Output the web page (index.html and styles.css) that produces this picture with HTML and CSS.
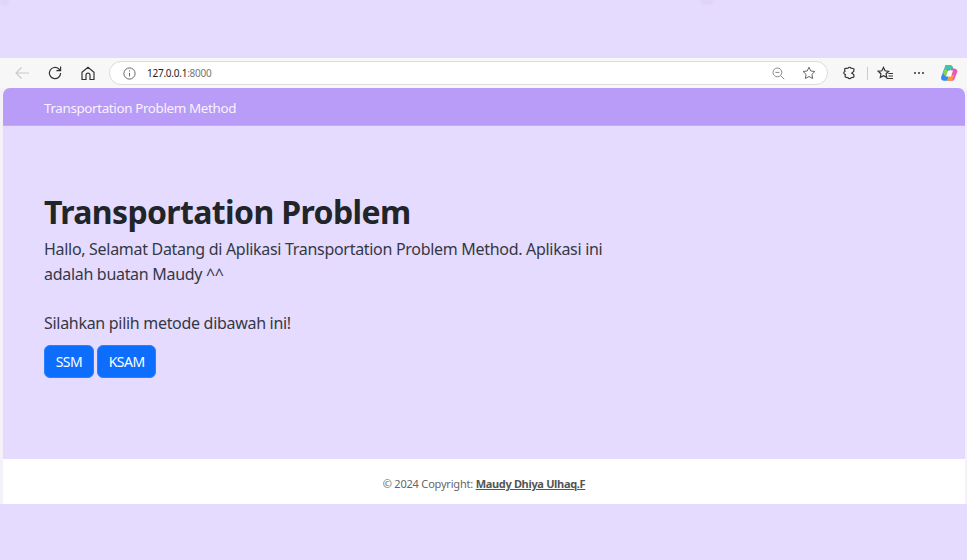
FILE: index.html

```html
<!DOCTYPE html>
<html lang="en">
<head>
  <meta charset="UTF-8">
  <meta name="viewport" content="width=device-width, initial-scale=1.0">
  <title>Transportation Problem</title>
  <link rel="stylesheet" href="styles.css">
</head>
<body>
  <div class="top-space">
    <span class="smudge smudge-left"></span>
    <span class="smudge smudge-mid"></span>
  </div>

  <div class="toolbar">
    <svg class="tool tool-back" width="16" height="14" viewBox="0 0 16 14"><path d="M15 7H2M7.5 1.5L2 7l5.5 5.5"/></svg>
    <svg class="tool tool-reload" width="16" height="16" viewBox="0 0 16 16"><path d="M13.6 8a5.6 5.6 0 1 1-1.7-4L13.6 5.6M13.6 1.4v4.2H9.4"/></svg>
    <svg class="tool tool-home" width="14" height="15" viewBox="0 0 14 15"><path d="M1 6.2L7 1.2l6 5v7.3H9V9.2a2 2 0 0 0-4 0v4.300H1z"/></svg>
    <div class="address">
      <svg class="info" width="13" height="13" viewBox="0 0 13 13"><circle cx="6.5" cy="6.5" r="5.6"/><path d="M6.5 5.8v3.6M6.5 3.4v1.1"/></svg>
      <span class="url"><span class="host">127.0.0.1</span>:8000</span>
      <svg class="zoom-icon" width="13" height="13" viewBox="0 0 13 13"><circle cx="5.4" cy="5.4" r="4.4"/><path d="M3.4 5.4h4M8.6 8.6l3.6 3.6"/></svg>
      <svg class="star" width="14" height="14" viewBox="0 0 14 14"><path d="M7 1.2l1.8 3.8 4.1.5-3 2.9.8 4.1L7 10.500l-3.700 2 .8-4.100-3-2.900 4.100-.5z"/></svg>
    </div>
    <svg class="tool tool-ext" width="15" height="15" viewBox="0 0 15 15"><path d="M6 2.200c.6-1.300 2.500-1.300 3 0l2 .3c.7.1 1.100.6 1 1.300l-.3 1.600-2 1.700 2 1.500.3 1.500c.1.7-.3 1.200-1 1.300l-1.900.3c-.5 1.300-2.500 1.300-3 0l-2-.3c-.7-.1-1.100-.6-1-1.300l.3-1.600C1.300 8 1.300 6 2.900 5.500l-.2-1.900c-.1-.7.3-1.200 1-1.300z"/></svg>
    <span class="divider"></span>
    <svg class="tool tool-fav" width="17" height="15" viewBox="0 0 17 15"><path d="M6.500 1.500l1.600 3.300 3.600.5-2.600 2.500.6 3.600-3.200-1.700-3.200 1.700.6-3.600L1.300 5.300l3.600-.5zM11.500 7.500h4.500M11.500 10h4.500M9.500 12.500h6.500"/></svg>
    <span class="more"><i></i><i></i><i></i></span>
    <svg class="copilot" width="18" height="18" viewBox="0 0 18 18">
      <path d="M5.500 1.200h5.500L7.500 16.800H4.200C1.800 16.800.6 15 1.200 13z" fill="#2f8bee"/>
      <path d="M5.500 1.200h5c1.300 0 2 .6 2.400 1.800l.7 2.500H7.500L5.200 11H3.500z" fill="#3cc9a0"/>
      <path d="M3 9l2-4.500 3 2.500-2 6z" fill="#8fd14f"/>
      <path d="M11 4.500h3c2 0 3 1.300 3.500 2.800l-3 7.700c-.5 1.300-1.500 1.800-3 1.800H8z" fill="#e858b4"/>
      <path d="M7 16.800l2-5.800h5.200l-1.500 4.300c-.4 1-1 1.500-2 1.500z" fill="#f79a3c"/>
      <path d="M8 6.500h5l-2 6H6z" fill="#ffffff"/>
    </svg>
  </div>

  <div class="viewport">
    <nav class="navbar">Transportation Problem Method</nav>
    <main class="content">
      <h1>Transportation Problem</h1>
      <p class="intro">Hallo, Selamat Datang di Aplikasi Transportation Problem Method. Aplikasi ini adalah buatan Maudy ^^</p>
      <p class="choose">Silahkan pilih metode dibawah ini!</p>
      <div class="buttons">
        <a class="btn" href="#">SSM</a>
        <a class="btn" href="#">KSAM</a>
      </div>
    </main>
    <footer class="footer">© 2024 Copyright:&nbsp;<a href="#">Maudy Dhiya Ulhaq.F</a></footer>
  </div>
</body>
</html>
```

FILE: styles.css

```css
* {
  box-sizing: border-box;
}
body {
  margin: 0;
  height: 560px;
  overflow: hidden;
  background-color: #e5dbff;
  font-family: "Noto Sans", "Open Sans", sans-serif;
  color: #212529;
}
.top-space {
  height: 58px;
  display: flex;
  align-items: flex-start;
}
.smudge {
  height: 5px;
  background-color: #dfd4f8;
  border-radius: 0 0 6px 6px;
  filter: blur(1px);
}
.smudge-left {
  width: 9px;
}
.smudge-mid {
  width: 14px;
  margin-left: 691px;
}
.toolbar {
  height: 30px;
  display: flex;
  align-items: center;
  background-color: #f7f7f7;
}
.toolbar svg {
  flex: none;
  fill: none;
  stroke: #333;
  stroke-width: 1.2;
}
.tool-back {
  margin-left: 14px;
  stroke: #c9c9c9 !important;
}
.tool-reload {
  margin-left: 17px;
}
.tool-home {
  margin-left: 18px;
}
.address {
  width: 719px;
  height: 24px;
  margin-left: 14px;
  padding: 0 11px 0 13px;
  display: flex;
  align-items: center;
  background-color: #fff;
  border: 1px solid #dcdcdc;
  border-radius: 12px;
}
.address .info {
  stroke: #666;
  stroke-width: 1;
}
.url {
  margin-left: 11px;
  flex: 1;
  font-size: 10px;
  letter-spacing: -0.25px;
  color: #777;
}
.host {
  color: #222;
}
.address .zoom-icon {
  stroke: #888;
  stroke-width: 1;
}
.address .star {
  margin-left: 17px;
  stroke: #666;
  stroke-width: 1;
}
.tool-ext {
  margin-left: 14px;
}
.divider {
  width: 1px;
  height: 13px;
  margin-left: 10px;
  background-color: #ccc;
}
.tool-fav {
  margin-left: 9px;
}
.more {
  margin-left: 20px;
  display: flex;
  gap: 2px;
}
.more i {
  width: 2px;
  height: 2px;
  background-color: #333;
  border-radius: 50%;
}
.toolbar .copilot {
  margin-left: 16px;
  stroke: none;
}
.viewport {
  padding: 0 2px 0 3px;
  background-color: #f4f2f8;
}
.navbar {
  height: 38px;
  padding: 2px 0 0 41px;
  display: flex;
  align-items: center;
  font-size: 13.4px;
  letter-spacing: -0.36px;
  color: #f8f3ff;
  background-color: #b99bf8;
  border-radius: 7px 7px 0 0;
  border-bottom: 1px solid #c3aaf5;
}
.content {
  height: 333px;
  padding: 66px 0 0 41px;
  background-color: #e5dbff;
}
h1 {
  margin: 0;
  font-size: 32px;
  line-height: 40px;
  font-weight: 700;
  letter-spacing: -0.63px;
}
.intro {
  width: 575px;
  margin: 5px 0 0;
  font-size: 16px;
  line-height: 25px;
  letter-spacing: -0.3px;
  color: #343845;
}
.choose {
  margin: 24px 0 0;
  font-size: 16px;
  line-height: 25px;
  letter-spacing: -0.3px;
  color: #343845;
}
.buttons {
  margin-top: 9px;
  display: flex;
  gap: 3px;
}
.btn {
  height: 33px;
  padding: 0 10.7px;
  display: flex;
  align-items: center;
  font-size: 14px;
  letter-spacing: -0.5px;
  color: #fff;
  text-decoration: none;
  background-color: #0d6efd;
  border: 1px solid #2a80fd;
  border-radius: 6px;
}
.footer {
  height: 45px;
  padding-top: 4px;
  display: flex;
  align-items: center;
  justify-content: center;
  font-size: 11px;
  letter-spacing: -0.2px;
  color: #666;
  background-color: #fff;
}
.footer a {
  color: #555;
  font-weight: 700;
  letter-spacing: -0.33px;
}
```
